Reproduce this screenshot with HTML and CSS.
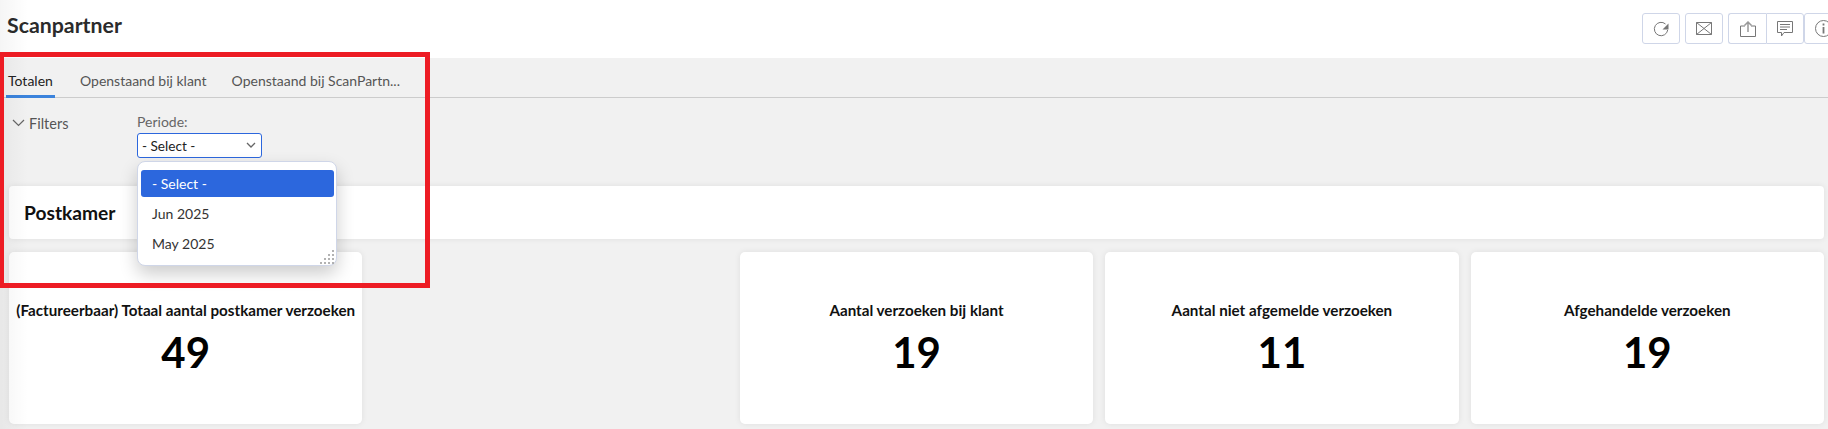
FILE: index.html
```html
<!DOCTYPE html>
<html lang="nl">
<head>
<meta charset="utf-8">
<title>Scanpartner</title>
<link rel="stylesheet" href="styles.css">
</head>
<body>
<header class="topbar">
  <h1 class="title">Scanpartner</h1>
  <div class="actions">
    <button class="icon-btn" aria-label="Vernieuwen"><svg viewBox="0 0 16 16" width="16" height="16"><path d="M12.500 3A6.700 6.700 0 1 0 14.700 9" fill="none" stroke="#777" stroke-width="1"/><path d="M15.500 2.500v6h-6z" fill="#777"/></svg></button>
    <button class="icon-btn" aria-label="E-mail"><svg viewBox="0 0 16 13" width="16" height="13"><path d="M.5.5h15v12H.5zM.5.5l15 12M15.500.5l-15 12" fill="none" stroke="#777"/></svg></button>
    <div class="btn-group">
      <button class="icon-btn" aria-label="Delen"><svg viewBox="0 0 16 16" width="16" height="16"><path d="M5 5H.5v10.500h15V5H11" fill="none" stroke="#777"/><path d="M8 11V1.500M4.500 4.500 8 1l3.500 3.500" fill="none" stroke="#999" stroke-width="1.500"/></svg></button>
      <button class="icon-btn" aria-label="Reacties"><svg viewBox="0 0 16 16" width="16" height="16"><path d="M.5.5h15v11H7l-2.500 3.500v-3.500H.5z" fill="none" stroke="#777"/><path d="M3 3.500h10M3 6h10M3 8.500h7" stroke="#777"/></svg></button>
      <button class="icon-btn" aria-label="Info"><svg viewBox="0 0 17 17" width="17" height="17"><circle cx="8.500" cy="8.500" r="8" fill="none" stroke="#777"/><path d="M8.500 3.500v2M8.500 7v6.500" stroke="#777" stroke-width="1.800"/></svg></button>
    </div>
  </div>
</header>

<nav class="tabs">
  <a class="tab active">Totalen</a>
  <a class="tab">Openstaand bij klant</a>
  <a class="tab">Openstaand bij ScanPartn...</a>
</nav>

<section class="filters">
  <div class="filters-toggle">
    <svg viewBox="0 0 13 8" width="13" height="8"><path d="M1 1l5.500 5.500L12 1" fill="none" stroke="#666" stroke-width="1.200"/></svg>
    <span>Filters</span>
  </div>
  <div class="field">
    <label class="field-label">Periode:</label>
    <div class="select">
      <span>- Select -</span>
      <svg viewBox="0 0 10 7" width="10" height="7"><path d="M1 1l4 4 4-4" fill="none" stroke="#666" stroke-width="1.300"/></svg>
    </div>
    <ul class="menu">
      <li class="selected">- Select -</li>
      <li>Jun 2025</li>
      <li>May 2025</li>
      <svg class="grip" viewBox="0 0 16 16" width="16" height="16"><path d="M13 1v2M12 2h2M9 5v2M8 6h2M13 5v2M12 6h2M5 9v2M4 10h2M9 9v2M8 10h2M13 9v2M12 10h2M1 13v2M0 14h2M5 13v2M4 14h2M9 13v2M8 14h2M13 13v2M12 14h2" stroke="#999" stroke-width="1"/></svg>
    </ul>
  </div>
</section>

<main class="content">
  <div class="section-head"><h2>Postkamer</h2></div>
  <div class="kpi-grid">
    <article class="kpi"><h3>(Factureerbaar) Totaal aantal postkamer verzoeken</h3><p>49</p></article>
    <div></div>
    <article class="kpi"><h3>Aantal verzoeken bij klant</h3><p>19</p></article>
    <article class="kpi"><h3>Aantal niet afgemelde verzoeken</h3><p>11</p></article>
    <article class="kpi"><h3>Afgehandelde verzoeken</h3><p>19</p></article>
  </div>
</main>

<div class="annotation"></div>
<div class="edge-shade"></div>
</body>
</html>
```
FILE: styles.css
```css
* { box-sizing: border-box; }
html, body { margin: 0; padding: 0; }
body {
  width: 1828px;
  height: 429px;
  overflow: hidden;
  background: #f1f1f1;
  font-family: Lato, "Liberation Sans", sans-serif;
  color: #222;
  position: relative;
}
.topbar {
  height: 58px;
  background: #fff;
  display: flex;
  justify-content: space-between;
  padding: 12px 0 0 7px;
}
.title {
  margin: 0;
  font-size: 21.3px;
  line-height: 26px;
  font-weight: 700;
  color: #2b2b2b;
}
.actions {
  display: flex;
  gap: 5px;
  margin-top: 1px;
  margin-right: -14px;
  height: 31px;
}
.btn-group { display: flex; }
.btn-group .icon-btn:nth-child(1) {
  border-right: 0;
  border-radius: 3px 0 0 3px;
}
.btn-group .icon-btn:nth-child(2) { border-radius: 0 3px 3px 0; }
.icon-btn {
  width: 38px;
  height: 31px;
  padding: 0;
  background: #fff;
  border: 1px solid #cfd6e8;
  border-radius: 3px;
  display: flex;
  align-items: center;
  justify-content: center;
}
.tabs {
  height: 40px;
  display: flex;
  gap: 25px;
  padding-left: 6px;
  border-bottom: 1px solid #ccc;
  font-size: 14px;
}
.tab {
  padding: 14px 0 0 0;
  line-height: 18px;
  height: 40px;
  color: #555;
}
.tab.active {
  color: #222;
  border-bottom: 3px solid #3b83dc;
  width: 49px;
  padding-left: 2px;
}
.filters {
  height: 88px;
  display: flex;
  padding: 15px 0 0 12px;
}
.filters-toggle {
  width: 125px;
  display: flex;
  align-items: center;
  gap: 4px;
  height: 18px;
  margin-top: 1px;
  font-size: 14.500px;
  color: #555;
}
.field { position: relative; width: 125px; }
.field-label {
  display: block;
  font-size: 14px;
  line-height: 18px;
  color: #666;
  margin-bottom: 2px;
}
.select {
  height: 25px;
  background: #fff;
  border: 1px solid #2c67dd;
  border-radius: 3px;
  display: flex;
  align-items: center;
  justify-content: space-between;
  padding: 0 5px 0 4px;
  font-size: 13.600px;
  color: #222;
}
.menu {
  position: absolute;
  z-index: 3;
  left: 0;
  top: 48px;
  width: 200px;
  height: 105px;
  margin: 0;
  padding: 8px 2px 0 3px;
  list-style: none;
  background: #fff;
  border: 1px solid #cfd6e8;
  border-radius: 8px;
  box-shadow: 0 8px 18px rgba(0, 0, 0, .2);
  font-size: 14px;
}
.menu li {
  height: 27px;
  margin-bottom: 3px;
  padding-left: 11px;
  line-height: 27px;
  border-radius: 3px;
  color: #333;
}
.menu li.selected { background: #2c67dd; color: #fff; }
.grip { position: absolute; right: 0; bottom: 0; }
.content { padding: 0 4px 0 9px; }
.section-head {
  height: 53px;
  background: #fff;
  border-radius: 4px;
  box-shadow: 0 0 6px rgba(0, 0, 0, .08);
  padding-left: 15px;
  display: flex;
  align-items: center;
}
.section-head h2 {
  margin: 0;
  font-size: 19.200px;
  font-weight: 700;
  color: #111;
}
.kpi-grid {
  margin-top: 13px;
  display: grid;
  grid-template-columns: repeat(5, 1fr);
  gap: 12px;
}
.kpi {
  height: 172px;
  background: #fff;
  border-radius: 5px;
  box-shadow: 0 0 6px rgba(0, 0, 0, .08);
  text-align: center;
  padding-top: 48px;
}
.kpi h3 {
  margin: 0;
  font-size: 15.200px;
  line-height: 20px;
  font-weight: 700;
  color: #111;
}
.kpi p {
  margin: 7px 0 0;
  font-size: 42px;
  line-height: 50px;
  font-weight: 700;
  color: #000;
}
.annotation {
  position: absolute;
  z-index: 5;
  left: -1px;
  top: 52px;
  width: 431px;
  height: 236px;
  border: 5px solid #ed1c24;
  pointer-events: none;
}
.edge-shade {
  position: absolute;
  z-index: 2;
  left: 0;
  top: 0;
  width: 28px;
  height: 429px;
  background: linear-gradient(to right, rgba(0, 0, 0, .04), rgba(0, 0, 0, 0));
  pointer-events: none;
}
```
